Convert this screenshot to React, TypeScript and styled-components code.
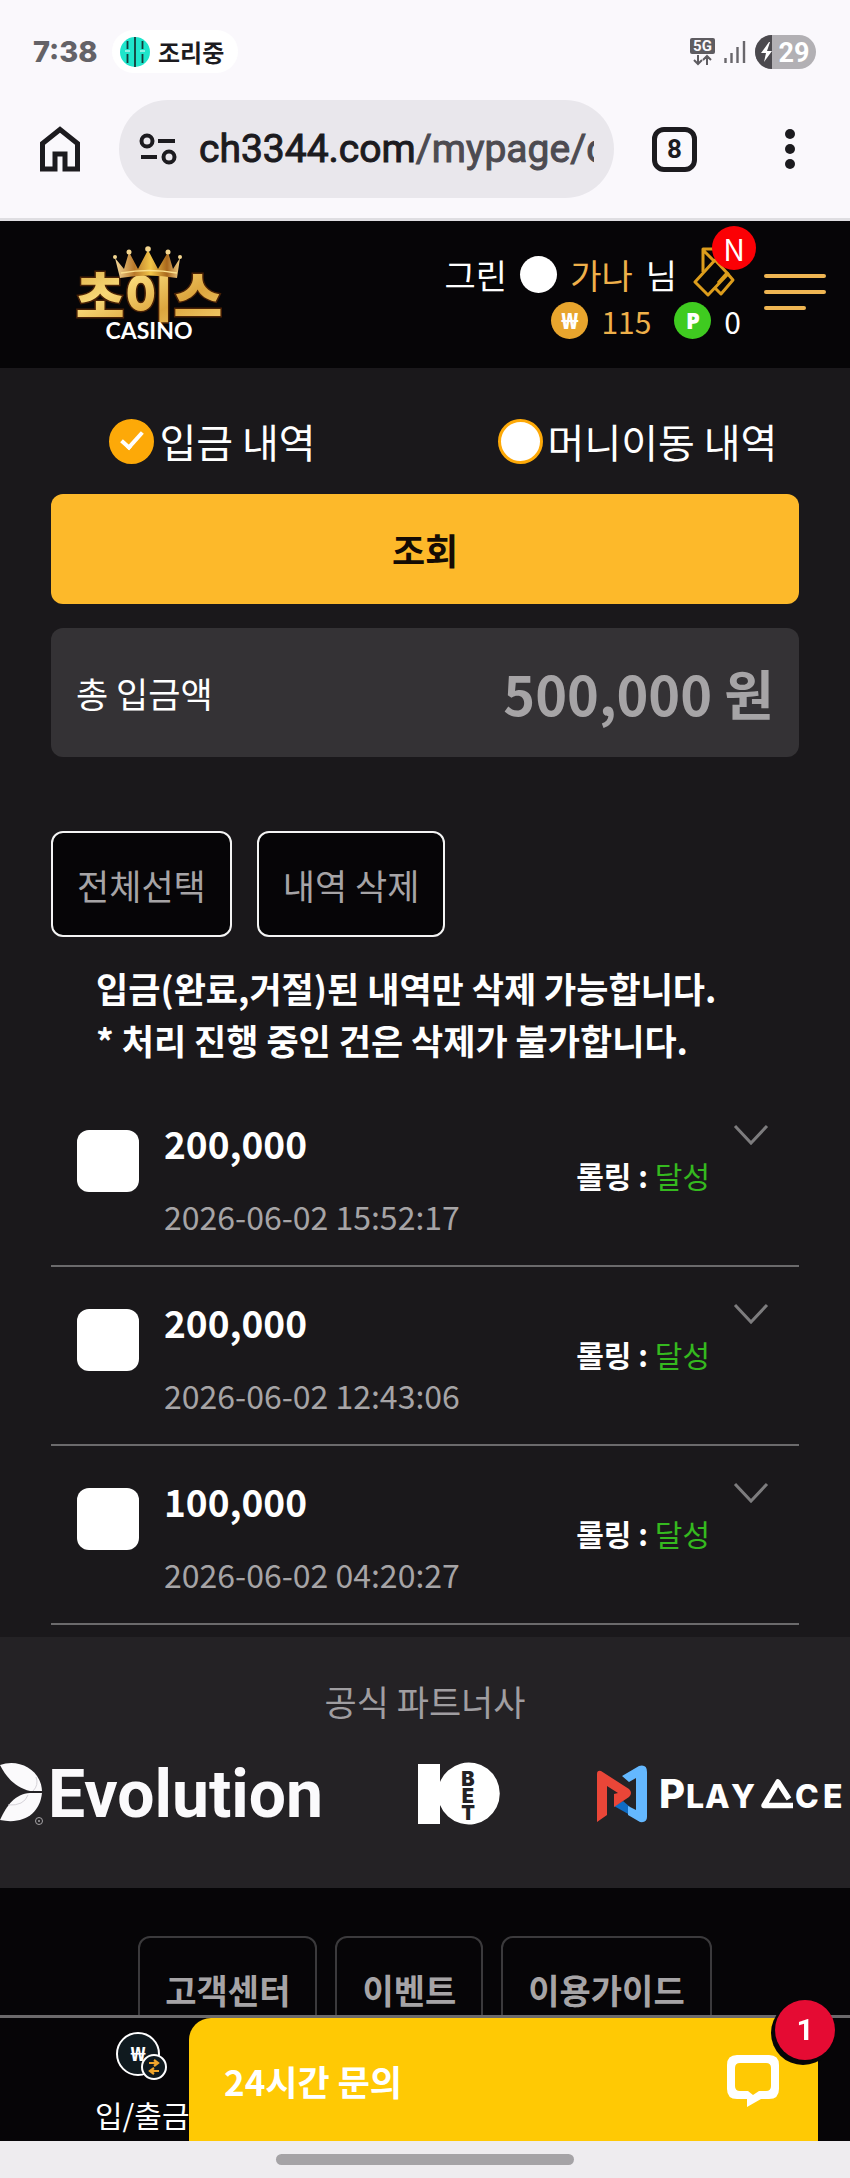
import React from "react";
import styled, { createGlobalStyle } from "styled-components";

const gold = "#fdb92a";
const sans = `"Noto Sans CJK KR", "Noto Sans", sans-serif`;

const GlobalStyle = createGlobalStyle`
  *, *::before, *::after { box-sizing: border-box; }
  body { margin: 0; background: #060507; font-family: ${sans}; color: #fff; }
  button { font-family: inherit; color: inherit; background: none; border: 0; padding: 0; cursor: pointer; }
  a { color: inherit; text-decoration: none; }
  p, h1, h2, ul { margin: 0; padding: 0; }
  svg { display: block; flex: none; }
`;

const Page = styled.div`
  display: flex;
  flex-direction: column;
  min-height: 100vh;
`;

/* ---------- phone and browser bars ---------- */

const BrowserChrome = styled.div`
  background: #faf8fc;
  border-bottom: 3px solid #dfdee2;
  color: #1c1b1f;
`;

const StatusBar = styled.div`
  display: flex;
  align-items: center;
  padding: 30px 34px 0 33px;
  height: 73px;
`;

const Clock = styled.span`
  font: 800 29px/44px Inter, Roboto, sans-serif;
  color: #646267;
  width: 79px;
`;

const StatusChip = styled.span`
  display: flex;
  align-items: center;
  gap: 8px;
  height: 43px;
  padding: 0 14px 0 8px;
  border-radius: 22px;
  background: #fff;
  font-size: 24px;
  font-weight: 700;
`;

const StatusIcons = styled.div`
  display: flex;
  align-items: center;
  gap: 9px;
  margin-left: auto;
`;

const Toolbar = styled.div`
  display: flex;
  align-items: center;
  padding: 27px 55px 20px 39px;
`;

const AddressBar = styled.button`
  display: flex;
  align-items: center;
  gap: 22px;
  flex: 1;
  min-width: 0;
  height: 98px;
  margin: 0 38px;
  padding: 0 20px;
  border-radius: 49px;
  background: #e9e7ec;
`;

const Url = styled.span`
  flex: 1;
  overflow: hidden;
  white-space: nowrap;
  text-align: left;
  font: 400 39px/56px Roboto, sans-serif;
  -webkit-text-stroke: 1px currentColor;
  color: #1c1b1f;
  span { color: #4d4b51; }
`;

const TabCount = styled.button`
  width: 45px;
  height: 45px;
  border: 5px solid #1c1b1f;
  border-radius: 12px;
  margin-right: 88px;
  && { font: 700 26px/35px Roboto, sans-serif; }
`;

/* ---------- site header ---------- */

const SiteHeader = styled.header`
  display: flex;
  align-items: center;
  height: 147px;
  padding: 0 24px 0 70px;
  background: #060507;
`;

const Profile = styled.div`
  display: flex;
  flex-direction: column;
  align-items: flex-end;
  gap: 6px;
  margin: 6px 23px 0 auto;
`;

const ProfileRow = styled.div<{ $size: number }>`
  display: flex;
  align-items: center;
  gap: 13px;
  height: 40px;
  font-size: ${(p) => p.$size}px;
  line-height: 40px;
`;

const Dot = styled.span`
  width: 37px;
  height: 37px;
  border-radius: 50%;
  background: #fff;
`;

const Accent = styled.span`
  color: #eeb04a;
`;

const Coin = styled.span<{ $color: string }>`
  display: grid;
  place-items: center;
  width: 37px;
  height: 37px;
  border-radius: 50%;
  background: ${(p) => p.$color};
  font: 900 22px/37px "Noto Sans", sans-serif;
`;

const PointCoin = styled(Coin)`
  margin-left: 10px;
`;

const MessageLink = styled.a`
  position: relative;
  margin: 0 6px 6px 3px;
`;

const NewBadge = styled.span`
  position: absolute;
  top: -21px;
  right: -21px;
  width: 44px;
  height: 44px;
  border-radius: 50%;
  background: #fb0005;
  text-align: center;
  font-size: 30px;
  line-height: 44px;
`;

const MenuButton = styled.button`
  display: flex;
  flex-direction: column;
  gap: 12px;
  width: 62px;
  margin-bottom: 6px;
  span { height: 4px; border-radius: 2px; background: #efb552; }
  span:last-child { width: 42px; }
`;

/* ---------- history ---------- */

const Main = styled.main`
  background: #1a181b;
  padding: 0 51px 12px;
`;

const TypeTabs = styled.fieldset`
  display: grid;
  grid-template-columns: 1fr 1fr;
  border: 0;
  margin: 0 -51px;
  padding: 43px 0 23px;
`;

const TypeOption = styled.label`
  display: flex;
  align-items: center;
  justify-content: center;
  gap: 5px;
  height: 60px;
  font-size: 40px;
  line-height: 60px;
  white-space: nowrap;
`;

const Radio = styled.input`
  appearance: none;
  display: grid;
  place-items: center;
  width: 45px;
  height: 45px;
  margin: 0;
  border: 3px solid #fda908;
  border-radius: 50%;
  background: #fff;
  &:checked { background: #fda908; }
  &:checked::after {
    content: "";
    width: 12px;
    height: 22px;
    margin-top: -6px;
    border: solid #fff;
    border-width: 0 4px 4px 0;
    transform: rotate(42deg);
  }
`;

const SearchButton = styled.button`
  display: block;
  width: 100%;
  height: 110px;
  border-radius: 12px;
  background: ${gold};
  color: #140b04;
  font-size: 36px;
  font-weight: 700;
`;

const TotalPanel = styled.div`
  display: flex;
  align-items: center;
  justify-content: space-between;
  height: 129px;
  margin-top: 24px;
  padding: 0 25px;
  border-radius: 12px;
  background: #343235;
  font-size: 35px;
  strong { font-size: 54px; font-weight: 700; color: #a6a4a6; }
`;

const Actions = styled.div`
  display: flex;
  gap: 25px;
  margin-top: 74px;
`;

const ActionButton = styled.button`
  height: 106px;
  padding: 0 24px;
  border: 2px solid #f4f4f4;
  border-radius: 12px;
  background: #060507;
  color: #a6a4a6;
  font-size: 35px;
`;

const Notice = styled.p`
  margin-top: 25px;
  padding: 0 45px;
  font-size: 35px;
  font-weight: 700;
  line-height: 52px;
`;

const HistoryList = styled.ul`
  list-style: none;
  margin-top: 22px;
`;

const HistoryRow = styled.li`
  display: flex;
  align-items: center;
  height: 179px;
  padding: 0 30px 0 26px;
  border-bottom: 2px solid #6b6a6c;
`;

const Checkbox = styled.input`
  appearance: none;
  align-self: flex-start;
  width: 62px;
  height: 62px;
  margin: 42px 25px 0 0;
  border-radius: 12px;
  background: #fff;
  &:checked { background: ${gold}; }
`;

const Entry = styled.label`
  display: flex;
  flex-direction: column;
  flex: 1;
  padding-top: 6px;
  line-height: 73px;
  strong { font-size: 37px; font-weight: 700; }
  time { font-size: 32px; color: #a6a4a6; }
`;

const Rolling = styled.span`
  padding-bottom: 4px;
  font-size: 30px;
  font-weight: 700;
  span { font-weight: 400; color: #35b91f; }
`;

const ExpandButton = styled.button`
  align-self: flex-start;
  margin: 36px 0 0 23px;
`;

/* ---------- partners and footer ---------- */

const Partners = styled.section`
  height: 251px;
  background: #242225;
`;

const PartnersTitle = styled.h2`
  padding-top: 38px;
  text-align: center;
  font-size: 35px;
  font-weight: 400;
  line-height: 52px;
  color: #a09ea1;
`;

const LogoStrip = styled.div`
  display: flex;
  align-items: center;
  justify-content: space-between;
  margin-top: 34px;
  padding-right: 5px;
`;

const Footer = styled.footer`
  flex: 1;
  display: flex;
  align-items: flex-start;
  justify-content: center;
  gap: 18px;
  padding-top: 48px;
  background: #060507;
`;

const FooterLink = styled.a`
  display: flex;
  align-items: center;
  height: 106px;
  padding: 0 25px;
  border: 2px solid #3b3a3c;
  border-radius: 12px;
  font-size: 34px;
  font-weight: 700;
  color: #a6a4a6;
`;

/* ---------- fixed bottom dock ---------- */

const Dock = styled.div`
  position: fixed;
  left: 0;
  right: 0;
  bottom: 0;
`;

const BottomNav = styled.nav`
  position: relative;
  height: 126px;
  padding-left: 95px;
  border-top: 3px solid #6b696b;
  background: #060507;
`;

const NavItem = styled.a`
  display: inline-flex;
  flex-direction: column;
  align-items: center;
  gap: 10px;
  padding-top: 14px;
  font-size: 30px;
  line-height: 44px;
`;

const ChatWidget = styled.button`
  position: absolute;
  top: 0;
  bottom: 0;
  left: 189px;
  right: 32px;
  display: flex;
  align-items: center;
  justify-content: space-between;
  padding: 2px 39px 0 35px;
  border-top-left-radius: 22px;
  background: #ffc904;
  && { color: #fff; }
  font-size: 35px;
  font-weight: 700;
`;

const ChatBadge = styled.span`
  position: absolute;
  top: -18px;
  right: -17px;
  width: 60px;
  height: 60px;
  border-radius: 50%;
  background: #e50b33;
  box-shadow: -2px 3px 0 2px #060507;
  text-align: center;
  font: 700 30px/60px Roboto, sans-serif;
`;

const GestureBar = styled.div`
  display: flex;
  justify-content: center;
  height: 37px;
  padding-top: 13px;
  background: #eeecef;
  span { width: 35%; height: 11px; border-radius: 6px; background: #a5a3a6; }
`;

/* ---------- drawings ---------- */

const TealMark = () => (
  <svg width="30" height="30" viewBox="0 0 30 30">
    <circle cx="15" cy="15" r="15" fill="#1fe5cb" />
    <path d="M7.500 4v8M7.500 17v9M15 0v30M22.500 4v8M22.500 17v9" stroke="#163b3a" strokeWidth="1.800" />
    <path d="M5 14h5M20 14h5" stroke="#fff" strokeWidth="1.200" />
  </svg>
);

const NetworkIcon = () => (
  <svg width="25" height="28" viewBox="0 0 25 28">
    <rect width="25" height="16" rx="2" fill="#5e5c61" />
    <text x="12.500" y="13" textAnchor="middle" fontFamily="Roboto, sans-serif" fontWeight="700" fontSize="15" fill="#faf8fc">5G</text>
    <path d="M8 17v9M4 22l4 4 4-4M17 27v-9M13 22l4-4 4 4" stroke="#5e5c61" strokeWidth="2" fill="none" />
  </svg>
);

const SignalIcon = () => (
  <svg width="22" height="24" viewBox="0 0 22 24">
    <path d="M1.500 18v5M7.500 13v10M13.500 7v16M20 1v22" stroke="#69676c" strokeWidth="2.400" />
  </svg>
);

const BatteryIcon = () => (
  <svg width="61" height="34" viewBox="0 0 61 34">
    <rect width="61" height="34" rx="17" fill="#b2b0b4" />
    <path d="M17 0a17 17 0 0 0 0 34z" fill="#4b494e" />
    <path d="M14 7 6 18h5l-2 9 8-11h-5l3-9z" fill="#fff" />
    <text x="39" y="27" textAnchor="middle" fontFamily="Roboto, sans-serif" fontWeight="700" fontSize="27" fill="#fff">29</text>
  </svg>
);

const HomeIcon = () => (
  <svg width="42" height="46" viewBox="0 0 42 46" fill="none" stroke="#1c1b1f" strokeWidth="5">
    <path d="M3.500 17.500 21 3.500l17.500 14V43H26V28H16v15H3.500z" />
  </svg>
);

const TuneIcon = () => (
  <svg width="38" height="32" viewBox="0 0 38 32" fill="none" stroke="#1c1b1f" strokeWidth="4">
    <circle cx="8" cy="8" r="5.500" />
    <path d="M19 8h17M2 24h16" />
    <circle cx="30" cy="24" r="5.500" />
  </svg>
);

const DotsIcon = () => (
  <svg width="10" height="42" viewBox="0 0 10 42" fill="#1c1b1f">
    <circle cx="5" cy="6" r="5" />
    <circle cx="5" cy="21" r="5" />
    <circle cx="5" cy="36" r="5" />
  </svg>
);

const BrandLogo = () => (
  <svg width="158" height="102" viewBox="0 0 158 102" role="img" aria-label="초이스 카지노">
    <defs>
      <linearGradient id="goldText" x1="0" y1="0" x2="1" y2="1">
        <stop offset="0" stopColor="#d9a53a" />
        <stop offset="0.35" stopColor="#f8d877" />
        <stop offset="0.65" stopColor="#dda63e" />
        <stop offset="1" stopColor="#f6d272" />
      </linearGradient>
      <linearGradient id="goldCrown" x1="0" y1="0" x2="1" y2="0">
        <stop offset="0" stopColor="#f4d99a" />
        <stop offset="0.3" stopColor="#b9792a" />
        <stop offset="0.55" stopColor="#f2c548" />
        <stop offset="0.8" stopColor="#a8671c" />
        <stop offset="1" stopColor="#f1cf86" />
      </linearGradient>
    </defs>
    <text x="79" y="73" textAnchor="middle" fontFamily="Noto Sans CJK KR, sans-serif" fontWeight="900" fontSize="53" fill="url(#goldText)" stroke="#4a2206" strokeWidth="3" paintOrder="stroke">초이스</text>
    <path d="M50 34 45 14l9 11 5-17 9 17L78 6l10 19 10-17 5 17 7-11-3 20q-29-5-57 0z" fill="url(#goldCrown)" />
    <path d="M51 29q28-5 56 0" stroke="#fbe08c" strokeWidth="1.500" fill="none" />
    <g fill="#f3d68f">
      <circle cx="45" cy="13" r="2" />
      <circle cx="59" cy="8" r="2.500" />
      <circle cx="78" cy="5" r="2.800" />
      <circle cx="98" cy="8" r="2.500" />
      <circle cx="110" cy="13" r="2" />
    </g>
    <text x="79" y="95" textAnchor="middle" fontFamily="Lato, sans-serif" fontWeight="700" fontSize="23" fill="#fff">CASINO</text>
  </svg>
);

const EnvelopeIcon = () => (
  <svg width="42" height="50" viewBox="0 0 42 50" fill="none" stroke="#dc9d1c" strokeWidth="3" strokeLinejoin="round">
    <path d="M2 35 22 13l13 14-20 21z" />
    <path d="M10 25V2h12M10 3l12 12" />
    <path d="M22 41l6 6 12-14-6-7-9 10" />
  </svg>
);

const ChevronIcon = () => (
  <svg width="36" height="22" viewBox="0 0 36 22" fill="none" stroke="#7d7c7e" strokeWidth="3">
    <path d="m2 2 16 17L34 2" />
  </svg>
);

const EvolutionLogo = () => (
  <svg width="320" height="66" viewBox="0 0 320 66" role="img" aria-label="Evolution">
    <path d="M0 4C18-3 41 8 42 30H30C17 27 7 18 0 4z" fill="#fbfafc" />
    <path d="M42 32C40 52 24 64 0 59 7 44 15 33 30 32z" fill="#fbfafc" />
    <path d="M36 16q3 8-3 14M8 44q16 1 20-10" stroke="#d5d2d8" fill="none" />
    <circle cx="39" cy="60" r="3.500" fill="none" stroke="#a5a3a6" />
    <circle cx="39" cy="60" r="1" fill="#a5a3a6" />
    <text x="48" y="56" fontFamily="Roboto, sans-serif" fontWeight="700" fontSize="66" fill="#fbfafc">Evolution</text>
  </svg>
);

const TenBetLogo = () => (
  <svg width="82" height="64" viewBox="0 0 82 64" role="img" aria-label="10BET">
    <path d="M0 2h22v18a31 31 0 1 1 0 23v19H0z" fill="#fff" />
    <g fontFamily="Inter, sans-serif" fontWeight="900" fontSize="20" fill="#242225" textAnchor="middle">
      <text x="50" y="24">B</text>
      <text x="50" y="41">E</text>
      <text x="50" y="58">T</text>
    </g>
  </svg>
);

const PlayAceLogo = () => (
  <svg width="248" height="60" viewBox="0 0 248 60" role="img" aria-label="PlayAce">
    <path d="M26 37 33 43v8L17 42z" fill="#0f6cc4" />
    <path d="M25 12 42 2q8-2 8 6v45q0 6-7 5L31 51V42l8 4V14l-7 4z" fill="#64b8ff" />
    <path d="M0 10q0-4 4-3l28 18q4 4 0 8L17 43V30l4-1-11-7v29L0 58z" fill="#ea4638" />
    <g fontFamily="Inter, sans-serif" fontWeight="800" fill="#fff">
      <text x="62" y="44" fontSize="40">P</text>
      <text x="89 108 134" y="44" fontSize="32">LAY</text>
      <text x="198 226" y="44" fontSize="32">CE</text>
    </g>
    <path d="M196 41.500H167L181 18l11 17" fill="none" stroke="#fff" strokeWidth="5.500" strokeLinejoin="round" />
  </svg>
);

const WalletIcon = () => (
  <svg width="52" height="50" viewBox="0 0 52 50">
    <circle cx="22" cy="22" r="21" fill="#101a1f" stroke="#fff" strokeWidth="2" />
    <text x="22" y="29" textAnchor="middle" fontFamily="Noto Sans, sans-serif" fontWeight="800" fontSize="20" fill="#fff">₩</text>
    <circle cx="38" cy="35" r="12" fill="#101a1f" stroke="#fff" strokeWidth="2" />
    <path d="M33 31h9m-4-3 4 3-4 3M43 39h-9m4-3-4 3 4 3" stroke="#f0a52c" strokeWidth="2.200" fill="none" />
  </svg>
);

const ChatIcon = () => (
  <svg width="52" height="52" viewBox="0 0 52 52">
    <path d="M10 0h32q10 0 10 10v24q0 10-10 10H34L20 52V44H10Q0 44 0 34V10Q0 0 10 0zm3 8q-5 0-5 5v18q0 5 5 5h8l5 4 6-4h7q5 0 5-5V13q0-5-5-5z" fill="#fff" fillRule="evenodd" />
  </svg>
);

const deposits = [
  { amount: "200,000", date: "2026-06-02 15:52:17" },
  { amount: "200,000", date: "2026-06-02 12:43:06" },
  { amount: "100,000", date: "2026-06-02 04:20:27" },
];

export default function App() {
  return (
    <Page>
      <GlobalStyle />
      <BrowserChrome>
        <StatusBar>
          <Clock>7:38</Clock>
          <StatusChip>
            <TealMark />
            조리중
          </StatusChip>
          <StatusIcons>
            <NetworkIcon />
            <SignalIcon />
            <BatteryIcon />
          </StatusIcons>
        </StatusBar>
        <Toolbar>
          <button aria-label="홈"><HomeIcon /></button>
          <AddressBar aria-label="주소창">
            <TuneIcon />
            <Url>ch3344.com<span>/mypage/c</span></Url>
          </AddressBar>
          <TabCount aria-label="탭 8개">8</TabCount>
          <button aria-label="더보기"><DotsIcon /></button>
        </Toolbar>
      </BrowserChrome>

      <SiteHeader>
        <a href="#home"><BrandLogo /></a>
        <Profile>
          <ProfileRow $size={34}>
            <span>그린</span>
            <Dot />
            <Accent>가나</Accent>
            <span>님</span>
            <MessageLink href="#messages" aria-label="쪽지">
              <EnvelopeIcon />
              <NewBadge>N</NewBadge>
            </MessageLink>
          </ProfileRow>
          <ProfileRow $size={30}>
            <Coin $color="#e8a52d">₩</Coin>
            <Accent>115</Accent>
            <PointCoin $color="#3fcb20">P</PointCoin>
            <span>0</span>
          </ProfileRow>
        </Profile>
        <MenuButton aria-label="메뉴"><span /><span /><span /></MenuButton>
      </SiteHeader>

      <Main>
        <TypeTabs>
          <TypeOption>
            <Radio type="radio" name="type" defaultChecked />
            입금 내역
          </TypeOption>
          <TypeOption>
            <Radio type="radio" name="type" />
            머니이동 내역
          </TypeOption>
        </TypeTabs>
        <SearchButton>조회</SearchButton>
        <TotalPanel>
          <span>총 입금액</span>
          <strong>500,000 원</strong>
        </TotalPanel>
        <Actions>
          <ActionButton>전체선택</ActionButton>
          <ActionButton>내역 삭제</ActionButton>
        </Actions>
        <Notice>
          입금(완료,거절)된 내역만 삭제 가능합니다.
          <br />* 처리 진행 중인 건은 삭제가 불가합니다.
        </Notice>
        <HistoryList>
          {deposits.map((d, i) => (
            <HistoryRow key={d.date}>
              <Checkbox type="checkbox" id={`deposit-${i}`} />
              <Entry htmlFor={`deposit-${i}`}>
                <strong>{d.amount}</strong>
                <time>{d.date}</time>
              </Entry>
              <Rolling>롤링 : <span>달성</span></Rolling>
              <ExpandButton aria-label="자세히"><ChevronIcon /></ExpandButton>
            </HistoryRow>
          ))}
        </HistoryList>
      </Main>

      <Partners>
        <PartnersTitle>공식 파트너사</PartnersTitle>
        <LogoStrip>
          <EvolutionLogo />
          <TenBetLogo />
          <PlayAceLogo />
        </LogoStrip>
      </Partners>

      <Footer>
        <FooterLink href="#support">고객센터</FooterLink>
        <FooterLink href="#event">이벤트</FooterLink>
        <FooterLink href="#guide">이용가이드</FooterLink>
      </Footer>

      <Dock>
        <BottomNav>
          <NavItem href="#wallet">
            <WalletIcon />
            입/출금
          </NavItem>
          <ChatWidget>
            24시간 문의
            <ChatIcon />
            <ChatBadge>1</ChatBadge>
          </ChatWidget>
        </BottomNav>
        <GestureBar><span /></GestureBar>
      </Dock>
    </Page>
  );
}
